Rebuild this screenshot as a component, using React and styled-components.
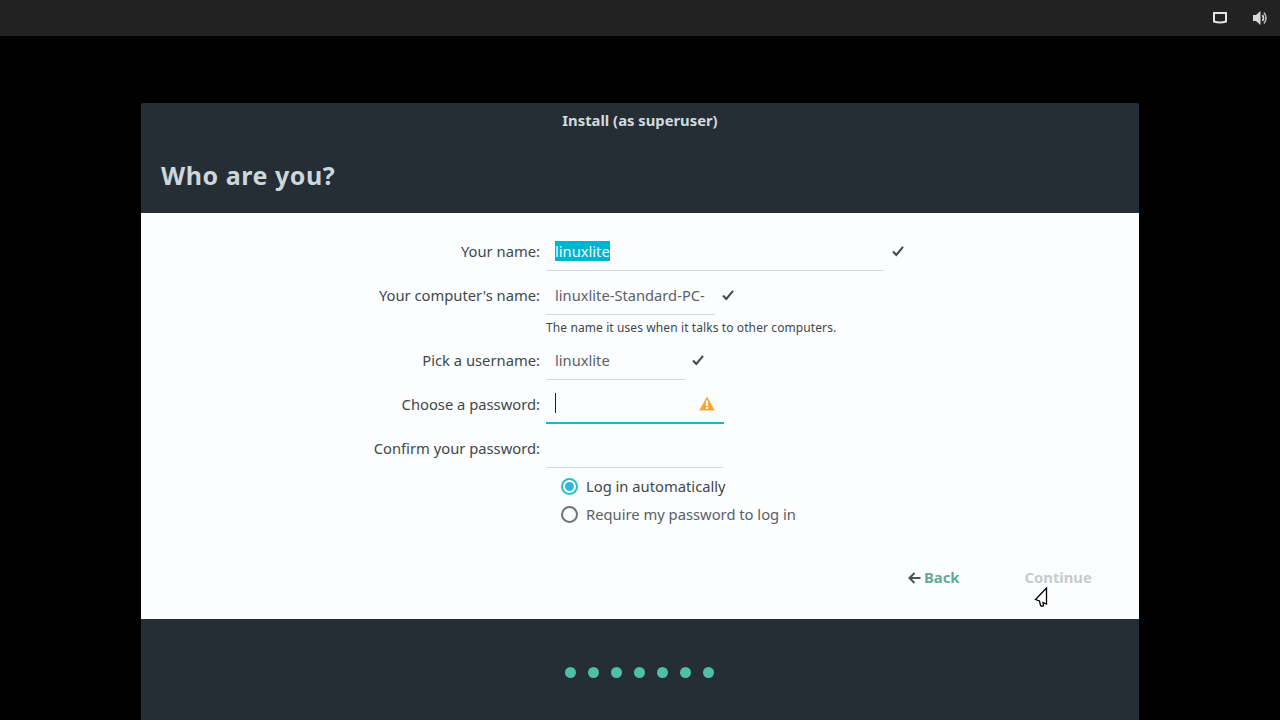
import React from "react";
import styled, { createGlobalStyle } from "styled-components";

const GlobalStyle = createGlobalStyle`
  html, body {
    margin: 0;
    height: 100%;
    background: #000;
    overflow: hidden;
    font-family: "Noto Sans", "Open Sans", sans-serif;
  }
`;

const Screen = styled.div`
  width: 1280px;
  height: 720px;
  display: flex;
  flex-direction: column;
  background: #000;
`;

const TopBar = styled.div`
  height: 36px;
  flex: none;
  background: #222222;
  display: flex;
  align-items: center;
  justify-content: flex-end;
  gap: 25px;
  padding-right: 12px;
  box-sizing: border-box;
`;

const Window = styled.div`
  width: 998px;
  margin: 67px 0 0 141px;
  flex: 1;
  display: flex;
  flex-direction: column;
`;

const Header = styled.div`
  height: 110px;
  flex: none;
  background: #252e34;
  border-radius: 2px 2px 0 0;
  box-sizing: border-box;
`;

const Title = styled.div`
  height: 35px;
  line-height: 35px;
  text-align: center;
  font-size: 14.8px;
  font-weight: 700;
  color: #d3dade;
`;

const Heading = styled.h1`
  margin: 19px 0 0 20px;
  font-size: 25px;
  line-height: 36px;
  font-weight: 700;
  letter-spacing: 0.55px;
  color: #ccd6dc;
`;

const Body = styled.div`
  height: 406px;
  flex: none;
  position: relative;
  background: #fcfdfe;
  box-sizing: border-box;
  padding-top: 14px;
  display: flex;
  flex-direction: column;
`;

const Row = styled.div`
  display: grid;
  grid-template-columns: 399px auto;
  grid-template-rows: 44px;
  column-gap: 6px;
  height: 44px;
  justify-content: start;
`;

const Label = styled.label`
  text-align: right;
  font-size: 14.75px;
  line-height: 48px;
  height: 44px;
  color: #40484c;
`;

const FieldWrap = styled.div`
  display: flex;
  align-items: center;
`;

const Field = styled.div`
  width: ${(p) => p.$width}px;
  height: 44px;
  box-sizing: border-box;
  padding: 4px 9px 0;
  display: flex;
  align-items: center;
  justify-content: space-between;
  white-space: nowrap;
  overflow: hidden;
  border-bottom: ${(p) => (p.$focus ? "2px solid #22b3c5" : "1px solid #d6dadd")};
  font-size: 14.7px;
  color: #5a6166;
`;

const Selected = styled.span`
  background: #00b4d0;
  color: #f4fcff;
  line-height: 20px;
`;

const Caret = styled.span`
  width: 1px;
  height: 20px;
  background: #222;
`;

const CheckSlot = styled.span`
  display: flex;
  margin-left: ${(p) => p.$left || 6}px;
  margin-top: 4px;
`;

const Hint = styled.div`
  margin: 4px 0 0 405px;
  height: 17px;
  line-height: 17px;
  font-size: 12px;
  letter-spacing: 0.1px;
  color: #40484c;
`;

const RadioList = styled.div`
  margin: 4px 0 0 420px;
  display: flex;
  flex-direction: column;
`;

const RadioRow = styled.div`
  height: 28px;
  display: flex;
  align-items: center;
  gap: 8px;
  font-size: 14.75px;
  color: ${(p) => (p.$on ? "#40484c" : "#5a6166")};
`;

const RadioDot = styled.span`
  width: 17px;
  height: 17px;
  border-radius: 50%;
  box-sizing: border-box;
  background: #fcfdfe;
  border: 2px solid ${(p) => (p.$on ? "#2bc0c9" : "#6d7377")};
  display: flex;
  align-items: center;
  justify-content: center;
  &::after {
    content: "";
    width: 9px;
    height: 9px;
    border-radius: 50%;
    background: ${(p) => (p.$on ? "#35b5dd" : "transparent")};
  }
`;

const Actions = styled.div`
  position: absolute;
  top: 353px;
  left: 767px;
  display: flex;
  align-items: center;
`;

const ActionButton = styled.span`
  display: flex;
  align-items: center;
  gap: 3px;
  height: 22px;
  font-size: 14.8px;
  font-weight: 700;
  color: ${(p) => (p.$off ? "#c6cbcd" : "#65a99a")};
  margin-left: ${(p) => p.$left || 0}px;
`;

const BackArrow = styled.svg`
  margin-top: 2px;
`;

const Cursor = styled.svg`
  position: absolute;
  left: 893px;
  top: 373px;
`;

const Footer = styled.div`
  flex: 1;
  background: #252e34;
  display: flex;
  justify-content: center;
  gap: 12px;
  padding: 48px 2px 0 0;
  box-sizing: border-box;
`;

const Dot = styled.span`
  width: 11px;
  height: 11px;
  border-radius: 50%;
  background: #4fbfa8;
`;

const Check = () => (
  <svg width="14" height="14" viewBox="0 0 14 14">
    <path d="M2 7.5 L5.3 11 L12 2.8" fill="none" stroke="#41484c" strokeWidth="2" />
  </svg>
);

export default function App() {
  return (
    <Screen>
      <GlobalStyle />
      <TopBar>
        <svg width="14" height="12" viewBox="0 0 14 12">
          <path d="M1 1 H13 V9.5 Q7 11.5 1 9.5 Z" fill="none" stroke="#e4e4e4" strokeWidth="2" />
        </svg>
        <svg width="16" height="16" viewBox="0 0 16 16">
          <path d="M1 5 H4 L8.5 1 V15 L4 11 H1 Z" fill="#d8d8d8" />
          <path d="M10.5 5 Q12.5 8 10.5 11" fill="none" stroke="#d8d8d8" strokeWidth="1.6" />
          <path d="M12 2.5 Q16 8 12 13.5" fill="none" stroke="#b4b4b4" strokeWidth="1.6" />
        </svg>
      </TopBar>
      <Window>
        <Header>
          <Title>Install (as superuser)</Title>
          <Heading>Who are you?</Heading>
        </Header>
        <Body>
          <Row>
            <Label>Your name:</Label>
            <FieldWrap>
              <Field $width={338}>
                <Selected>linuxlite</Selected>
              </Field>
              <CheckSlot $left={7}><Check /></CheckSlot>
            </FieldWrap>
          </Row>
          <Row>
            <Label>Your computer's name:</Label>
            <FieldWrap>
              <Field $width={169}>linuxlite-Standard-PC-</Field>
              <CheckSlot><Check /></CheckSlot>
            </FieldWrap>
          </Row>
          <Hint>The name it uses when it talks to other computers.</Hint>
          <Row>
            <Label>Pick a username:</Label>
            <FieldWrap>
              <Field $width={139}>linuxlite</Field>
              <CheckSlot><Check /></CheckSlot>
            </FieldWrap>
          </Row>
          <Row>
            <Label>Choose a password:</Label>
            <FieldWrap>
              <Field $width={178} $focus>
                <Caret />
                <svg width="16" height="15" viewBox="0 0 16 15">
                  <path d="M8 0.5 L15.8 14.5 H0.2 Z" fill="#f7a833" />
                  <rect x="7" y="4.5" width="2" height="5.5" fill="#fff" />
                  <rect x="7" y="11" width="2" height="2" fill="#fff" />
                </svg>
              </Field>
            </FieldWrap>
          </Row>
          <Row>
            <Label>Confirm your password:</Label>
            <FieldWrap>
              <Field $width={178} />
            </FieldWrap>
          </Row>
          <RadioList>
            <RadioRow $on>
              <RadioDot $on />
              Log in automatically
            </RadioRow>
            <RadioRow>
              <RadioDot />
              Require my password to log in
            </RadioRow>
          </RadioList>
          <Actions>
            <ActionButton>
              <BackArrow width="13" height="12" viewBox="0 0 13 12">
                <path d="M12.5 6 H2 M6.5 1 L1.5 6 L6.5 11" fill="none" stroke="#4a5054" strokeWidth="2" />
              </BackArrow>
              Back
            </ActionButton>
            <ActionButton $off $left={65}>Continue</ActionButton>
          </Actions>
          <Cursor width="15" height="22" viewBox="0 0 15 22">
            <path d="M12.5 2 L1.5 13.5 L5.5 15 L6.5 19.5 Q8 21 9.5 19.5 L9 16.5 L12.5 18 Z" fill="#fff" stroke="#000" strokeWidth="1.3" />
          </Cursor>
        </Body>
        <Footer>
          {[0, 1, 2, 3, 4, 5, 6].map((i) => (
            <Dot key={i} />
          ))}
        </Footer>
      </Window>
    </Screen>
  );
}
